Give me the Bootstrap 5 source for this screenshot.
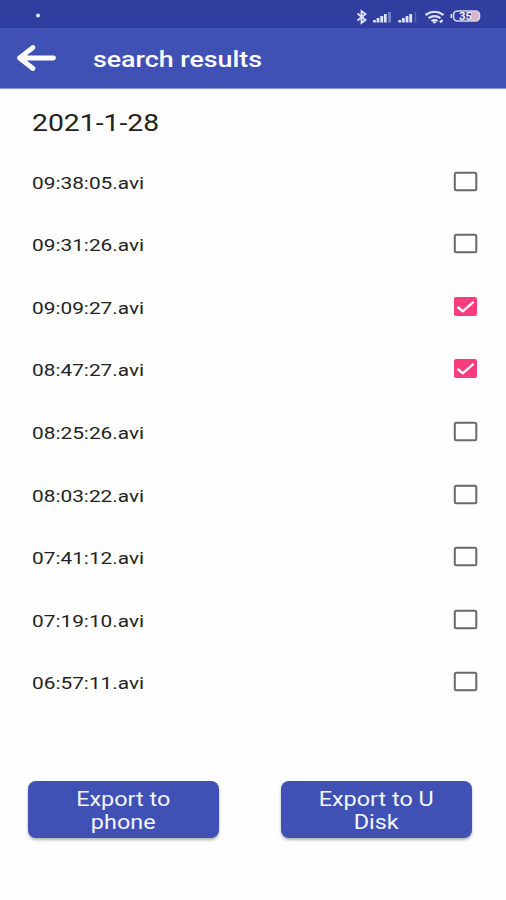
<!DOCTYPE html>
<html lang="en">
<head>
<meta charset="utf-8">
<meta name="viewport" content="width=device-width, initial-scale=1">
<title>search results</title>
<link href="https://cdn.jsdelivr.net/npm/bootstrap@5.3.0/dist/css/bootstrap.min.css" rel="stylesheet">
<style>
body{font-family:Roboto,"Liberation Sans",sans-serif;color:#222;background:#fefefe;width:506px;height:900px;overflow:hidden}
.status-bar{height:28px;background:#303e9f}
.app-bar{height:60px;background:#3f51b5;box-shadow:0 1px 1px #8f98cf}
.wide{display:inline-block;white-space:nowrap;transform-origin:left center;transform:scaleX(var(--sx,1.2))}
.title-text{font-size:22.5px;font-weight:500;line-height:30px;margin-left:37px;padding-top:2px;--sx:1.19}
.date-text{font-size:24px;line-height:30px;height:62px;padding:20px 0 0 32px}
.date-text .wide{--sx:1.18}
.file-row{height:62.55px;padding:0 28px 0 32px}
.file-name{font-size:17px;line-height:24px;padding-top:3px;--sx:1.225}
.export-btn{width:191px;height:57px;background:#3f51b5;border-radius:8px;color:#f4f6ff;font-size:20px;line-height:22.5px;box-shadow:0 2px 3px rgba(0,0,0,.3)}
.export-btn:hover{background:#3f51b5;color:#fff}
.export-btn .wide{transform-origin:center;padding-top:3px;--sx:1.17}
.actions{padding:0 34px 0 28px;margin-top:68px}
</style>
</head>
<body>
<header>
<div class="status-bar">
<svg class="d-block" width="506" height="28" viewBox="0 0 506 28" fill="none" stroke="#dfe3fa">
<circle cx="38" cy="15.500" r="2" fill="#dfe8ff" stroke="none"/>
<path d="M357.500 13.500l8 6.500-4 3V11l4 3-8 6.500" stroke-width="1.800"/>
<g stroke-width="2.800"><path d="M374.500 22.500v-2.500M378 22.500v-4.500M381.700 22.500v-6.500M385.300 22.500v-8.500"/><path d="M389.500 22.500V12" stroke="#7580c8"/>
<path d="M399.700 22.500v-2.500M403.300 22.500v-4.500M407 22.500v-6.500M410.700 22.500v-8.500"/><path d="M415.500 22.500V12" stroke="#5964b7" stroke-width="1.500"/></g>
<path d="M425.500 15q9-6.500 18 0M428.500 18.200q6-4 12 0M431.500 21q3-2 6 0" stroke-width="2.200"/>
<circle cx="434.500" cy="22.300" r="1.300" fill="#dfe3fa" stroke="none"/><path d="M440 22.500l2.500-2.500" stroke-width="2.400"/>
<path d="M471 11h4q4.500 0 4.500 5t-4.500 5h-4z" fill="#dcb3cb" stroke="none"/>
<rect x="453.500" y="11" width="26" height="10" rx="4" stroke="#dcd3ea" stroke-width="1.700"/><path d="M451.300 14v4" stroke-width="1.500"/>
<text x="459" y="19.700" font-family="Roboto, sans-serif" font-size="10" font-weight="700" fill="#f4f4ff" stroke="none" textLength="13" lengthAdjust="spacingAndGlyphs">35</text>
</svg>
</div>
<nav class="app-bar d-flex align-items-center text-white ps-3">
<svg width="40" height="28" viewBox="0 0 40 28" fill="none" stroke="#fff" stroke-width="4.800" stroke-linecap="round" stroke-linejoin="round"><path d="M37.500 14H3.500M17 3.500L3.500 14 17 24.500"/></svg>
<span class="wide title-text">search results</span>
</nav>
</header>
<main>
<div class="date-text"><span class="wide">2021-1-28</span></div>
<div id="files"></div>
<div class="actions d-flex justify-content-between">
<button class="btn export-btn border-0 p-0"><span class="wide">Export to<br>phone</span></button>
<button class="btn export-btn border-0 p-0"><span class="wide">Export to U<br>Disk</span></button>
</div>
</main>
<script>
const names=['09:38:05','09:31:26','09:09:27','08:47:27','08:25:26','08:03:22','07:41:12','07:19:10','06:57:11'];
const empty='<rect x="1.800" y="1.800" width="21.500" height="17.500" rx="1.500" stroke="#6a6a6a" stroke-width="2"/>';
const checked='<rect x="1" y="1" width="23" height="19" rx="2" fill="#f93c7e"/><path d="M4.500 11l5.300 4.300L20.500 5.800" stroke="#fff" stroke-width="2.400"/>';
document.getElementById('files').innerHTML=names.map((n,i)=>`<div class="file-row d-flex align-items-center justify-content-between"><span class="wide file-name">${n}.avi</span><svg width="25" height="21" viewBox="0 0 25 21" fill="none">${i===2||i===3?checked:empty}</svg></div>`).join('');
</script>
<script src="https://cdn.jsdelivr.net/npm/bootstrap@5.3.0/dist/js/bootstrap.bundle.min.js"></script>
</body>
</html>
